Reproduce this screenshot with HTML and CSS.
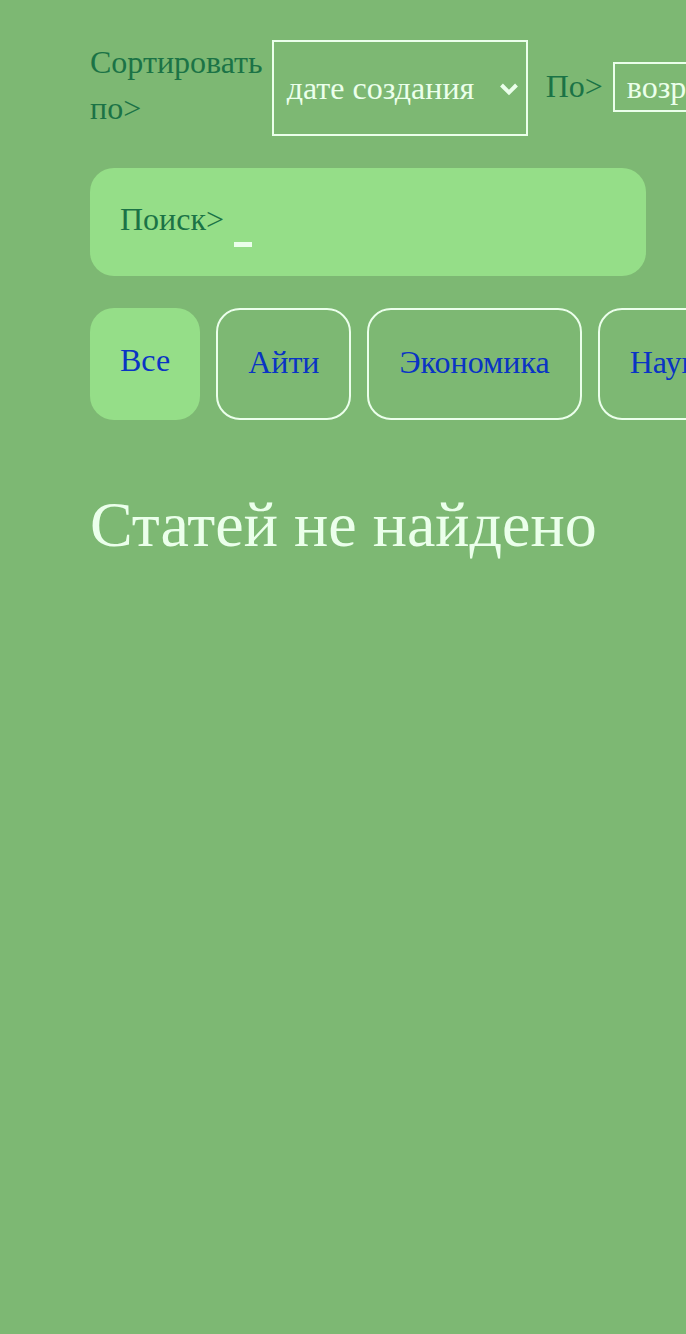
FILE: index.html
```html
<!DOCTYPE html>
<html lang="ru">
<head>
<meta charset="utf-8">
<link rel="stylesheet" href="styles.css">
</head>
<body>
<main class="page">
  <div class="sort-row">
    <span class="sort-label sort-label-main">Сортировать по&gt;</span>
    <div class="select select-big">
      <span>дате создания</span>
      <svg class="chev" width="18" height="13" viewBox="0 0 18 13"><path d="M1.5 2 L9 9.5 L16.5 2" fill="none" stroke="#ebffeb" stroke-width="4"/></svg>
    </div>
    <span class="sort-label sort-label-dir">По&gt;</span>
    <div class="select select-small"><span>возрастанию</span></div>
  </div>
  <div class="search">
    <span class="search-label">Поиск&gt;</span>
    <span class="caret"></span>
  </div>
  <div class="tabs">
    <button class="tab active">Все</button>
    <button class="tab">Айти</button>
    <button class="tab">Экономика</button>
    <button class="tab">Наука</button>
  </div>
  <h1 class="empty">Статей не найдено</h1>
</main>
</body>
</html>
```
FILE: styles.css
```css
html, body {
  margin: 0;
  background: #7db873;
  overflow: hidden;
}
body {
  font-family: "Liberation Serif", "Times New Roman", serif;
}
.page {
  padding: 40px 0 0 90px;
}
.sort-row {
  display: flex;
  align-items: center;
  gap: 10px;
  white-space: nowrap;
}
.sort-label {
  color: #1b7346;
  font-size: 32px;
  line-height: 42px;
}
.sort-label-main {
  white-space: normal;
  width: min-content;
  line-height: 46px;
  margin-top: -6px;
}
.sort-label-dir {
  margin-left: 8px;
  margin-top: -4px;
}
.select {
  box-sizing: border-box;
  border: 2px solid #ebffeb;
  color: #ebffeb;
  font-size: 32px;
  display: flex;
  align-items: center;
  flex-shrink: 0;
}
.select-big {
  width: 256px;
  height: 96px;
  padding: 0 8px 0 13px;
  justify-content: space-between;
  margin-left: -1px;
}
.chev {
  margin-top: 2px;
}
.select-small {
  height: 50px;
  padding: 0 12px;
  margin-top: -2px;
}
.search {
  margin-top: 32px;
  width: 556px;
  height: 108px;
  box-sizing: border-box;
  background: #95de88;
  border-radius: 24px;
  display: flex;
  align-items: center;
  padding-left: 30px;
  gap: 10px;
}
.search-label {
  color: #1b7346;
  font-size: 32px;
  margin-bottom: 6px;
}
.caret {
  width: 18px;
  height: 5px;
  background: #ebffeb;
  margin-top: 44px;
}
.tabs {
  margin-top: 32px;
  display: flex;
  gap: 16px;
  white-space: nowrap;
}
.tab {
  flex-shrink: 0;
  height: 112px;
  box-sizing: border-box;
  padding: 0 30px 4px;
  border: 2px solid #ebffeb;
  border-radius: 24px;
  background: transparent;
  color: #0a34c4;
  font-family: "Liberation Serif", "Times New Roman", serif;
  font-size: 32px;
}
.tab.active {
  background: #95de88;
  border: none;
  padding-bottom: 8px;
}
.empty {
  margin: 68px 0 0;
  color: #ebffeb;
  font-weight: normal;
  font-size: 64px;
}
```
